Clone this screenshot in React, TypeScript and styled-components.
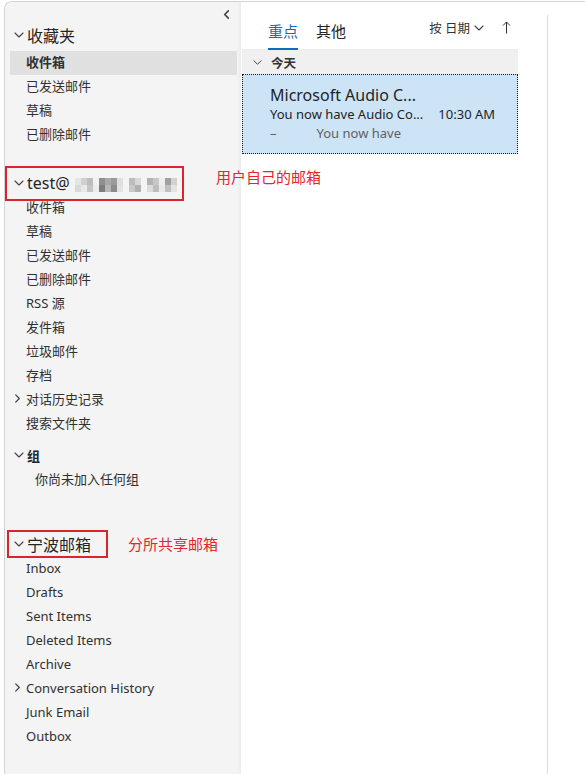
import React from "react";
import styled, { createGlobalStyle } from "styled-components";

const GlobalStyle = createGlobalStyle`
  html, body {
    margin: 0;
    padding: 0;
    background: #ffffff;
    font-family: "Noto Sans", "Noto Sans CJK SC", sans-serif;
    color: #242424;
  }
`;

const Frame = styled.div`
  margin: 1px 0 0 4px;
  height: 773px;
  display: flex;
  border-top: 1px solid #d4d4d4;
  border-left: 1px solid #d4d4d4;
  border-top-left-radius: 8px;
  overflow: hidden;
`;

const Sidebar = styled.nav`
  width: 236px;
  flex-shrink: 0;
  background: #f4f4f4;
  box-shadow: inset -4px 0 4px -3px rgba(0, 0, 0, 0.06);
  display: flex;
  flex-direction: column;
`;

const CollapseBar = styled.div`
  height: 20px;
  display: flex;
  justify-content: flex-end;
  align-items: center;
  padding: 2px 10px 0 0;
  color: #555;
`;

const Section = styled.section<{ $gap: number }>`
  margin-top: ${(p) => p.$gap}px;
  display: flex;
  flex-direction: column;
  position: relative;
`;

const Header = styled.div<{ $small?: boolean; $after?: number }>`
  height: 24px;
  margin-bottom: ${(p) => p.$after ?? 0}px;
  padding: 0 0 2px 9px;
  box-sizing: border-box;
  display: flex;
  align-items: center;
  gap: 3px;
  font-size: ${(p) => (p.$small ? "13px" : "16px")};
  font-weight: ${(p) => (p.$small ? 700 : 400)};
  color: #242424;
  white-space: nowrap;
`;

const Row = styled.div<{ $active?: boolean; $indent?: number }>`
  height: 24px;
  margin: 0 4px 0 5px;
  padding: 0 0 3px ${(p) => p.$indent ?? 16}px;
  box-sizing: border-box;
  display: flex;
  align-items: center;
  font-size: 13px;
  font-weight: ${(p) => (p.$active ? 700 : 400)};
  background: ${(p) => (p.$active ? "#e0e0e0" : "transparent")};
  color: #303030;
  position: relative;
  white-space: nowrap;
`;

const RowCaret = styled.span`
  position: absolute;
  left: 3px;
  top: 6px;
  display: flex;
`;

const Callout = styled.div<{ $width: number; $height: number; $left: number; $top: number }>`
  position: absolute;
  left: ${(p) => p.$left}px;
  top: ${(p) => p.$top}px;
  width: ${(p) => p.$width}px;
  height: ${(p) => p.$height}px;
  border: 2px solid #d9262c;
  box-sizing: border-box;
  pointer-events: none;
`;

const Note = styled.span<{ $left: number; $top: number }>`
  position: absolute;
  left: ${(p) => p.$left}px;
  top: ${(p) => p.$top}px;
  font-size: 15px;
  color: #e5252a;
  white-space: nowrap;
  font-family: "Noto Sans CJK SC", sans-serif;
`;

const Mosaic = styled.span`
  display: inline-grid;
  grid-template-columns: repeat(17, 6px);
  grid-auto-rows: 7px;
  margin-left: 2px;
  margin-top: 3px;
`;

const Tile = styled.span<{ $shade: string }>`
  background: ${(p) => p.$shade};
`;

const ListPane = styled.div`
  width: 276px;
  margin-left: 1px;
  flex-shrink: 0;
  display: flex;
  flex-direction: column;
`;

const TabBar = styled.div`
  height: 47px;
  display: flex;
  align-items: flex-end;
  padding-left: 26px;
  gap: 18px;
  border-bottom: 1px solid #ececec;
`;

const Tab = styled.div<{ $active?: boolean }>`
  font-size: 15px;
  padding-bottom: 7px;
  color: ${(p) => (p.$active ? "#0f6cbd" : "#242424")};
  border-bottom: 2px solid ${(p) => (p.$active ? "#0f6cbd" : "transparent")};
  margin-bottom: -1px;
`;

const SortBox = styled.div`
  margin-left: auto;
  display: flex;
  align-items: center;
  gap: 4px;
  font-size: 12.5px;
  padding: 0 7px 12px 0;
  color: #333;
`;

const SortArrow = styled.span`
  margin-left: 14px;
  display: flex;
`;

const GroupHead = styled.div`
  height: 24px;
  background: #f0f0f0;
  display: flex;
  align-items: center;
  gap: 9px;
  padding-left: 11px;
  font-size: 12.5px;
  font-weight: 600;
  color: #333;
`;

const MailCard = styled.div`
  height: 80px;
  background: #cde4f7;
  border: 1px dotted #1a1a1a;
  box-sizing: border-box;
  padding: 10px 0 0 27px;
  display: flex;
  flex-direction: column;
`;

const Sender = styled.div`
  font-size: 16px;
  line-height: 20px;
  color: #242424;
`;

const SubjectLine = styled.div`
  display: flex;
  font-size: 13px;
  line-height: 19px;
  color: #242424;
`;

const Time = styled.span`
  margin-left: 15px;
`;

const Preview = styled.div`
  font-size: 13px;
  line-height: 19px;
  color: #616161;
  display: flex;
  gap: 40px;
`;

const ReadingPane = styled.div`
  flex: 1;
  margin-left: 29px;
  margin-top: 13px;
  border-left: 1px solid #dcdcdc;
`;

const Chevron = ({ dir, size = 10 }: { dir: "down" | "right" | "left"; size?: number }) => {
  const d =
    dir === "down" ? "M1 3 L5 7 L9 3" : dir === "right" ? "M3 1 L7 5 L3 9" : "M7 1 L3 5 L7 9";
  return (
    <svg width={size} height={size} viewBox="0 0 10 10" fill="none">
      <path
        d={d}
        stroke="#444"
        strokeWidth={dir === "left" ? 1.8 : dir === "right" ? 1.4 : 1.1}
        strokeLinecap="round"
        strokeLinejoin="round"
      />
    </svg>
  );
};

// pixelated address after "test@"
const shades = [
  "#e6e6e6", "#cfcfcf", "#bdbdbd", "#f2f2f2", "#8f8f8f", "#a8a8a8", "#9a9a9a", "#dedede", "#f4f4f4",
  "#bcbcbc", "#d8d8d8", "#f4f4f4", "#b2b2b2", "#c7c7c7", "#ededed", "#a0a0a0", "#d2d2d2",
  "#d9d9d9", "#e8e8e8", "#c4c4c4", "#ececec", "#7d7d7d", "#b7b7b7", "#8c8c8c", "#e2e2e2", "#f4f4f4",
  "#c8c8c8", "#b0b0b0", "#f4f4f4", "#dcdcdc", "#bdbdbd", "#e9e9e9", "#c0c0c0", "#e3e3e3",
];

const favorites = ["收件箱", "已发送邮件", "草稿", "已删除邮件"];
const ownFolders: { name: string; more?: boolean }[] = [
  { name: "收件箱" },
  { name: "草稿" },
  { name: "已发送邮件" },
  { name: "已删除邮件" },
  { name: "RSS 源" },
  { name: "发件箱" },
  { name: "垃圾邮件" },
  { name: "存档" },
  { name: "对话历史记录", more: true },
  { name: "搜索文件夹" },
];
const sharedFolders: { name: string; more?: boolean }[] = [
  { name: "Inbox" },
  { name: "Drafts" },
  { name: "Sent Items" },
  { name: "Deleted Items" },
  { name: "Archive" },
  { name: "Conversation History", more: true },
  { name: "Junk Email" },
  { name: "Outbox" },
];

const FolderRow = ({ name, more }: { name: string; more?: boolean }) => (
  <Row>
    {more && (
      <RowCaret>
        <Chevron dir="right" size={9} />
      </RowCaret>
    )}
    {name}
  </Row>
);

export default function App() {
  return (
    <>
      <GlobalStyle />
      <Frame>
        <Sidebar>
          <CollapseBar>
            <Chevron dir="left" size={9} />
          </CollapseBar>

          <Section $gap={0}>
            <Header $after={3}>
              <Chevron dir="down" />
              收藏夹
            </Header>
            {favorites.map((f, i) => (
              <Row key={f} $active={i === 0}>
                {f}
              </Row>
            ))}
          </Section>

          <Section $gap={25}>
            <Header>
              <Chevron dir="down" />
              test@
              <Mosaic>
                {shades.map((s, i) => (
                  <Tile key={i} $shade={s} />
                ))}
              </Mosaic>
            </Header>
            <Callout $left={0} $top={-6} $width={179} $height={35} />
            <Note $left={211} $top={-6}>用户自己的邮箱</Note>
            {ownFolders.map((f) => (
              <FolderRow key={f.name} {...f} />
            ))}
          </Section>

          <Section $gap={8}>
            <Header $small>
              <Chevron dir="down" />
              组
            </Header>
            <Row $indent={25}>你尚未加入任何组</Row>
          </Section>

          <Section $gap={41}>
            <Header>
              <Chevron dir="down" />
              宁波邮箱
            </Header>
            <Callout $left={2} $top={-3} $width={101} $height={28} />
            <Note $left={123} $top={0}>分所共享邮箱</Note>
            {sharedFolders.map((f) => (
              <FolderRow key={f.name} {...f} />
            ))}
          </Section>
        </Sidebar>

        <ListPane>
          <TabBar>
            <Tab $active>重点</Tab>
            <Tab>其他</Tab>
            <SortBox>
              <span>按 日期</span>
              <Chevron dir="down" size={10} />
              <SortArrow>
                <svg width="9" height="13" viewBox="0 0 9 13" fill="none">
                  <path d="M4.5 12.5 V1 M1 4.5 L4.5 1 L8 4.5" stroke="#333" strokeWidth="1" />
                </svg>
              </SortArrow>
            </SortBox>
          </TabBar>
          <GroupHead>
            <Chevron dir="down" size={9} />
            今天
          </GroupHead>
          <MailCard>
            <Sender>Microsoft Audio C...</Sender>
            <SubjectLine>
              <span>You now have Audio Co...</span>
              <Time>10:30 AM</Time>
            </SubjectLine>
            <Preview>
              <span>–</span>
              <span>You now have</span>
            </Preview>
          </MailCard>
        </ListPane>

        <ReadingPane />
      </Frame>
    </>
  );
}
